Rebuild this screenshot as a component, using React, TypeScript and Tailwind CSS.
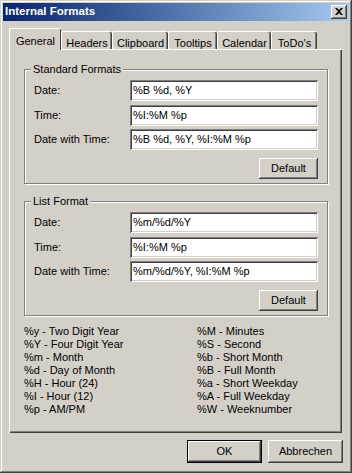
const raised =
  "shadow-[inset_-1px_-1px_#404040,inset_1px_1px_#ffffff,inset_-2px_-2px_#808080,inset_2px_2px_#d4d0c8]";
const sunken =
  "shadow-[inset_1px_1px_#808080,inset_-1px_-1px_#ffffff,inset_2px_2px_#404040,inset_-2px_-2px_#d4d0c8]";

const tabs = [
  { label: "General", w: "w-[52px]" },
  { label: "Headers", w: "w-[51px]" },
  { label: "Clipboard", w: "w-[56px]" },
  { label: "Tooltips", w: "w-[49px]" },
  { label: "Calendar", w: "w-[54px]" },
  { label: "ToDo's", w: "w-[46px]" },
];

const legendLeft = [
  "%y - Two Digit Year",
  "%Y - Four Digit Year",
  "%m - Month",
  "%d - Day of Month",
  "%H - Hour (24)",
  "%I - Hour (12)",
  "%p - AM/PM",
];

const legendRight = [
  "%M - Minutes",
  "%S - Second",
  "%b - Short Month",
  "%B - Full Month",
  "%a - Short Weekday",
  "%A - Full Weekday",
  "%W - Weeknumber",
];

type Row = { label: string; value: string };

function FormatGroup({ title, rows }: { title: string; rows: Row[] }) {
  return (
    <div className="relative h-[115px] w-[304px] border border-[#808080] shadow-[1px_1px_0_#ffffff,inset_1px_1px_0_#ffffff] pl-[9px] pt-[10px]">
      <span className="absolute -top-[7px] left-[6px] bg-[#d4d0c8] px-[2px] leading-[13px]">{title}</span>
      <div className="flex flex-col">
        {rows.map((r, i) => (
          <div key={r.label} className={`flex items-center ${i === 1 ? "mt-[4px]" : i === 2 ? "mt-[3px]" : ""}`}>
            <span className="w-[96px] leading-[13px]">{r.label}</span>
            <div className={`flex h-[21px] w-[188px] items-center bg-white pl-[3px] ${sunken}`}>
              <span className="leading-[13px]">{r.value}</span>
            </div>
          </div>
        ))}
      </div>
      <div className="mt-[8px] flex w-[284px] justify-end">
        <button className={`h-[21px] w-[59px] bg-[#d4d0c8] ${raised}`}>Default</button>
      </div>
    </div>
  );
}

export default function App() {
  return (
    <div
      className={`flex h-[473px] w-[352px] flex-col bg-[#d4d0c8] p-[3px] font-['Liberation_Sans',Arial,sans-serif] text-[11px] text-black shadow-[inset_-1px_-1px_#404040,inset_1px_1px_#d4d0c8,inset_-2px_-2px_#808080,inset_2px_2px_#ffffff]`}
    >
      {/* title bar */}
      <div className="flex h-[18px] items-center bg-gradient-to-r from-[#0a246a] to-[#a6caf0] pl-[2px] pr-[2px]">
        <span className="text-[11.5px] font-bold text-white">Internal Formats</span>
        <button className={`ml-auto flex h-[14px] w-[16px] items-center justify-center bg-[#d4d0c8] ${raised}`}>
          <svg width="8" height="7" viewBox="0 0 8 7" className="-mt-[1px]">
            <path d="M0 0h2l2 2 2-2h2L5 3.5 8 7H6L4 5 2 7H0l3-3.5z" fill="#000" />
          </svg>
        </button>
      </div>

      {/* tabs */}
      <div className="mt-[7px] pl-[6px] pr-[7px]">
        <div className="flex h-[21px] items-end">
          {tabs.map((t, i) =>
            i === 0 ? (
              <div
                key={t.label}
                className={`relative z-10 -mb-[1px] flex h-[22px] ${t.w} items-start justify-center rounded-t-[2px] border-l border-t border-white bg-[#d4d0c8] pt-[4px] shadow-[inset_-1px_0_#404040]`}
              >
                {t.label}
              </div>
            ) : (
              <div
                key={t.label}
                className={`flex h-[18px] ${t.w} items-start justify-center rounded-t-[2px] border-l border-t border-white pt-[3px] shadow-[inset_-1px_0_#404040,inset_-2px_0_#808080]`}
              >
                {t.label}
              </div>
            )
          )}
        </div>
        <div className="h-[384px] w-[333px] border-l border-t border-white pl-[14px] pt-[19px] shadow-[inset_-1px_-1px_#404040,inset_-2px_-2px_#808080]">
          <FormatGroup
            title="Standard Formats"
            rows={[
              { label: "Date:", value: "%B %d, %Y" },
              { label: "Time:", value: "%I:%M %p" },
              { label: "Date with Time:", value: "%B %d, %Y, %I:%M %p" },
            ]}
          />
          <div className="mt-[17px]">
            <FormatGroup
              title="List Format"
              rows={[
                { label: "Date:", value: "%m/%d/%Y" },
                { label: "Time:", value: "%I:%M %p" },
                { label: "Date with Time:", value: "%m/%d/%Y, %I:%M %p" },
              ]}
            />
          </div>
          <div className="mt-[9px] flex">
            <div className="flex w-[173px] flex-col">
              {legendLeft.map((l) => (
                <span key={l} className="leading-[13px]">{l}</span>
              ))}
            </div>
            <div className="flex flex-col">
              {legendRight.map((l) => (
                <span key={l} className="leading-[13px]">{l}</span>
              ))}
            </div>
          </div>
        </div>
      </div>

      {/* dialog buttons */}
      <div className="mt-[7px] flex justify-end gap-[6px] pr-[6px]">
        <button className={`h-[23px] w-[75px] border border-black bg-[#d4d0c8] ${raised}`}>OK</button>
        <button className={`h-[23px] w-[75px] bg-[#d4d0c8] ${raised}`}>Abbrechen</button>
      </div>
    </div>
  );
}
